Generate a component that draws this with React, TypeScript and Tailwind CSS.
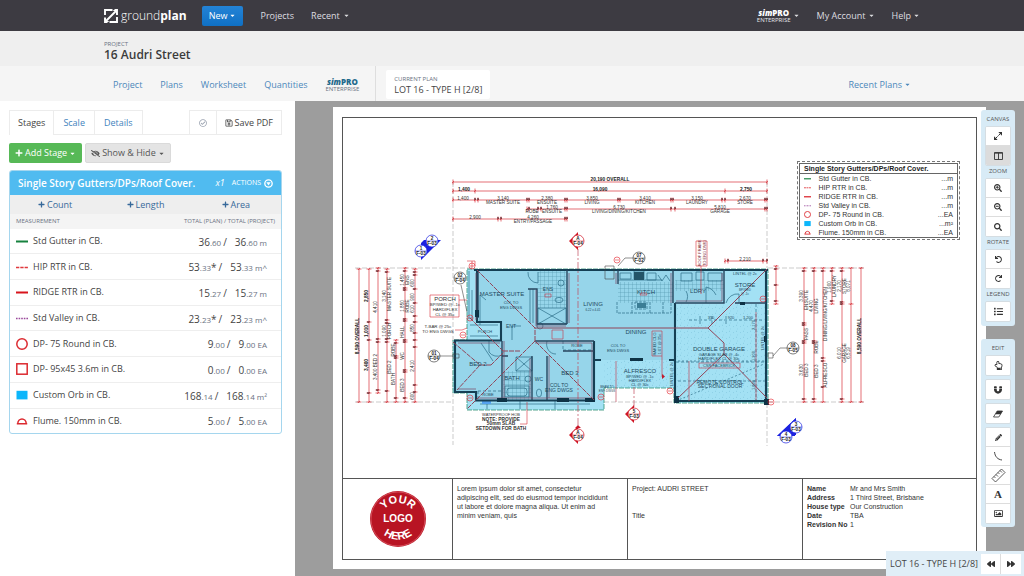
import type { ReactNode } from "react";
import {
  FaBackward,
  FaCaretDown,
  FaEyeSlash,
  FaForward,
  FaList,
  FaMagnet,
  FaPencilAlt,
  FaPlus,
  FaRedo,
  FaRegCheckCircle,
  FaRegHandPointUp,
  FaRegImage,
  FaRegSave,
  FaSearch,
  FaSearchMinus,
  FaSearchPlus,
  FaUndo,
} from "react-icons/fa";

type Symbol = "green" | "redDash" | "red" | "purpleDash" | "circle" | "square" | "fill" | "flume";

const measurements: { symbol: Symbol; name: string; whole: string; frac: string; mark?: string; unit: string }[] = [
  { symbol: "green", name: "Std Gutter in CB.", whole: "36", frac: ".60", unit: "m" },
  { symbol: "redDash", name: "HIP RTR in CB.", whole: "53", frac: ".33", mark: "*", unit: "m^" },
  { symbol: "red", name: "RIDGE RTR in CB.", whole: "15", frac: ".27", unit: "m" },
  { symbol: "purpleDash", name: "Std Valley in CB.", whole: "23", frac: ".23", mark: "*", unit: "m^" },
  { symbol: "circle", name: "DP- 75 Round in CB.", whole: "9", frac: ".00", unit: "EA" },
  { symbol: "square", name: "DP- 95x45 3.6m in CB.", whole: "0", frac: ".00", unit: "EA" },
  { symbol: "fill", name: "Custom Orb in CB.", whole: "168", frac: ".14", unit: "m²" },
  { symbol: "flume", name: "Flume. 150mm in CB.", whole: "5", frac: ".00", unit: "EA" },
];

const legend: { symbol: Symbol; name: string; unit: string }[] = [
  { symbol: "green", name: "Std Gutter in CB.", unit: "...m" },
  { symbol: "redDash", name: "HIP RTR in CB.", unit: "...m" },
  { symbol: "red", name: "RIDGE RTR in CB.", unit: "...m" },
  { symbol: "purpleDash", name: "Std Valley in CB.", unit: "...m" },
  { symbol: "circle", name: "DP- 75 Round in CB.", unit: "...EA" },
  { symbol: "fill", name: "Custom Orb in CB.", unit: "...m²" },
  { symbol: "flume", name: "Flume. 150mm in CB.", unit: "...EA" },
];

const details = [
  ["Name", "Mr and Mrs Smith"],
  ["Address", "1 Third Street, Brisbane"],
  ["House type", "Our Construction"],
  ["Date", "TBA"],
  ["Revision No", "1"],
];

function SymbolIcon({ symbol, className }: { symbol: Symbol; className: string }) {
  return (
    <svg aria-hidden className={className} viewBox="0 0 12 12" fill="none" strokeWidth={1.5}>
      {symbol === "green" && <path d="M0 6.500h12" stroke="#17823f" strokeWidth={2} />}
      {symbol === "redDash" && <path d="M0 6.500h12" stroke="#e0383d" strokeDasharray="3.3 1" />}
      {symbol === "red" && <path d="M0 6.500h12" stroke="#d8141c" strokeWidth={2} />}
      {symbol === "purpleDash" && <path d="M0 6.500h12" stroke="#9a4a9c" strokeDasharray="1.6 1" />}
      {symbol === "circle" && <circle cx={6} cy={6} r={5.2} stroke="#dc2a30" />}
      {symbol === "square" && <rect x={0.8} y={0.8} width={10.4} height={10.4} stroke="#dc2a30" />}
      {symbol === "fill" && <rect x={0.5} y={1.8} width={11} height={8.6} fill="#0cb6fb" />}
      {symbol === "flume" && <path d="M.8 8.800h10.400M1.800 8.600a4.200 4.600 0 0 1 8.400 0" stroke="#dc2a30" />}
    </svg>
  );
}

function SimPro({ tone }: { tone: "light" | "blue" }) {
  return (
    <span className="flex flex-col items-center">
      <span className={tone === "light" ? "text-[8px] font-extrabold leading-[8px] text-white" : "text-[8px] font-extrabold leading-[8px] text-[#1f6a8c]"}>
        <i>sim</i>PRO
      </span>
      <span className={tone === "light" ? "text-[6px] leading-[6px] text-gray-200" : "text-[6px] leading-[6px] text-gray-500"}>
        ENTERPRISE
      </span>
    </span>
  );
}

function TopBar() {
  return (
    <header className="bg-[#3d3b42] text-[#dddde0]">
      <div className="mx-auto flex h-[31px] max-w-[816px] items-center text-[9px]">
        <a href="#" className="flex items-center gap-[3px] text-white">
          <svg aria-hidden className="h-[14px] w-[14px]" viewBox="0 0 14 14" fill="none" stroke="currentColor" strokeWidth={1.9}>
            <path d="M1 6V1h7.500M13 8V13H5.500M10.500 1H13v5M1 8.500V13h2.500M3 11L11 3" />
            <path d="M1 8.800V13h4.200zM13 5.200V1H8.800z" fill="currentColor" stroke="none" />
          </svg>
          <span className="text-[12px] leading-4">
            <span className="font-light">ground</span>
            <span className="font-bold">plan</span>
          </span>
        </a>
        <button className="ml-[15px] flex h-5 items-center gap-[2px] rounded-[2px] bg-linear-to-b from-[#2383d6] to-[#0f70c4] px-[7px] text-white">
          New <FaCaretDown className="h-[7px] w-[7px]" />
        </button>
        <nav className="ml-[17px] flex items-center gap-[17px]">
          <a href="#">Projects</a>
          <a href="#" className="flex items-center gap-[3px]">
            Recent <FaCaretDown className="h-[7px] w-[7px]" />
          </a>
        </nav>
        <div className="ml-auto flex items-center gap-[17px]">
          <a href="#" className="flex items-center gap-[2px]">
            <SimPro tone="light" /> <FaCaretDown className="h-[7px] w-[7px]" />
          </a>
          <a href="#" className="flex items-center gap-[2px]">
            My Account <FaCaretDown className="h-[7px] w-[7px]" />
          </a>
          <a href="#" className="flex items-center gap-[2px]">
            Help <FaCaretDown className="h-[7px] w-[7px]" />
          </a>
        </div>
      </div>
    </header>
  );
}

function ProjectBar() {
  return (
    <div className="bg-[#efefef]">
      <div className="mx-auto h-[35px] max-w-[816px] pt-[10px]">
        <p className="text-[6px] leading-[7px] text-gray-500">PROJECT</p>
        <h1 className="text-[12px] font-semibold leading-[14px] text-[#3c3c3c]">16 Audri Street</h1>
      </div>
    </div>
  );
}

function SubNav() {
  return (
    <div className="bg-[#f5f5f5]">
      <div className="mx-auto flex h-[35px] max-w-[816px] items-stretch text-[9px] text-[#4c88bb]">
        <nav className="flex items-center gap-[18px] border-r border-[#dedede] pl-[9px] pr-[16px] pt-[2px]">
          <a href="#">Project</a>
          <a href="#">Plans</a>
          <a href="#">Worksheet</a>
          <a href="#">Quantities</a>
          <a href="#">
            <SimPro tone="blue" />
          </a>
        </nav>
        <div className="mb-[2px] ml-[10px] mt-[4px] flex flex-col justify-center rounded-[2px] bg-white px-[8px] pt-[2px]">
          <span className="text-[6px] leading-[9px] text-gray-500">CURRENT PLAN</span>
          <span className="text-[9px] leading-[12px] text-[#444]">LOT 16 - TYPE H [2/8]</span>
        </div>
        <a href="#" className="ml-auto mr-[9px] flex items-center gap-[2px] pt-[2px]">
          Recent Plans <FaCaretDown className="h-[7px] w-[7px]" />
        </a>
      </div>
    </div>
  );
}

function StagesPanel() {
  return (
    <aside className="w-[295px] shrink-0 bg-white px-[9px] pt-[9px] text-[#444]">
      <div className="mr-[4px] flex h-[25px] border-b border-[#ececec] text-[9px]">
        <button className="-mb-px border border-b-0 border-[#ececec] bg-white px-[8px]">Stages</button>
        <button className="border-r border-t border-[#ececec] px-[9px] text-[#3f83bd]">Scale</button>
        <button className="border-r border-t border-[#ececec] px-[9px] text-[#3f83bd]">Details</button>
        <button aria-label="Status" className="ml-auto border-l border-t border-[#ececec] px-[9px] text-gray-400">
          <FaRegCheckCircle className="h-[8px] w-[8px]" />
        </button>
        <button className="flex items-center gap-[2px] border-x border-t border-[#ececec] px-[8px]">
          <FaRegSave className="h-[8px] w-[8px]" /> Save PDF
        </button>
      </div>

      <div className="mt-[8px] flex gap-[3px] text-[9px]">
        <button className="flex h-[20px] items-center gap-[2px] rounded-[2px] bg-[#57b957] px-[6px] text-white">
          <FaPlus className="h-[8px] w-[8px]" /> Add Stage <FaCaretDown className="h-[7px] w-[7px]" />
        </button>
        <button className="flex h-[20px] items-center gap-[2px] rounded-[2px] border border-[#dadada] bg-[#e4e4e4] px-[5px] text-[#555]">
          <FaEyeSlash className="h-[9px] w-[9px]" /> Show &amp; Hide <FaCaretDown className="h-[7px] w-[7px]" />
        </button>
      </div>

      <section className="mr-[4px] mt-[7px] overflow-hidden rounded-[3px] border border-[#a5d6ee]">
        <div className="flex h-[24px] items-center bg-[#50bbf0] px-[8px] text-white">
          <h2 className="text-[10px] font-semibold">Single Story Gutters/DPs/Roof Cover.</h2>
          <span className="ml-auto text-[9px] italic">x1</span>
          <button className="ml-[7px] flex items-center gap-[3px] text-[7px]">
            ACTIONS
            <svg aria-hidden className="h-[9px] w-[9px]" viewBox="0 0 10 10">
              <circle cx={5} cy={5} r={4.1} fill="none" stroke="currentColor" strokeWidth={1.5} />
              <path d="M2.600 3.600h4.800L5 7.200z" fill="currentColor" />
            </svg>
          </button>
        </div>
        <div className="grid h-[19px] grid-cols-3 bg-[#eeeeee] text-[9px] text-[#37699a]">
          {["Count", "Length", "Area"].map((label) => (
            <button key={label} className="flex items-center justify-center gap-[2px]">
              <FaPlus className="h-[7px] w-[7px]" /> {label}
            </button>
          ))}
        </div>
        <table className="h-[219px] w-full">
          <thead>
            <tr className="h-[15px] bg-[#f4f4f4] text-[6px] leading-[15px] text-gray-500">
              <th className="pl-[6px] text-left font-normal">MEASUREMENT</th>
              <th className="pr-[6px] text-right font-normal">TOTAL (PLAN) / TOTAL (PROJECT)</th>
            </tr>
          </thead>
          <tbody>
            {measurements.map((m) => (
              <tr key={m.name} className="border-b border-[#eeeeee] last:border-b-0">
                <td className="pl-[6px] text-[9px] leading-3">
                  <span className="flex items-center gap-[5px]">
                    <SymbolIcon symbol={m.symbol} className="h-[12px] w-[12px]" /> {m.name}
                  </span>
                </td>
                <td className="whitespace-nowrap pr-[14px] pt-[2px] text-right text-[10px] leading-3">
                  {m.whole}
                  <span className="text-[8px] text-gray-500">{m.frac}</span>
                  {m.mark}
                  <span className="ml-[2px] mr-[8px]">/</span>
                  {m.whole}
                  <span className="text-[8px] text-gray-500">
                    {m.frac} {m.unit}
                  </span>
                </td>
              </tr>
            ))}
          </tbody>
        </table>
      </section>
    </aside>
  );
}

/* ── Plan drawing ── */

type Label = [number, number, string];

// Horizontal dimension runs: y, then tick positions
const rows: [number, number[]][] = [
  [182, [453, 767]],
  [191, [453, 475, 725, 767]],
  [200, [453, 475, 478, 527, 529, 565, 567, 618, 620, 671, 673, 722, 725, 765, 767]],
  [209, [527, 529, 538, 541, 565, 567, 671, 675, 765, 767]],
  [219, [453, 498, 501, 565, 567]],
  [261, [725, 728, 763, 767]],
];

// Vertical dimension runs: x, then tick positions
const columns: [number, number[]][] = [
  [359, [269, 402]],
  [369, [269, 322, 340, 393, 402]],
  [378, [268, 271, 339, 342, 390, 393]],
  [387, [269, 272, 320, 323, 339, 342, 391, 402]],
  [396, [340, 343, 356, 358, 398, 402]],
  [405, [268, 271, 288, 290, 319, 321, 340, 342, 370, 372, 398, 402]],
  [415, [269, 272, 275, 289, 303, 316, 322, 333, 340, 347, 385, 392, 402]],
  [776, [266, 269, 285, 301, 304]],
  [804, [268, 271, 323, 325, 341, 343, 399, 402]],
  [814, [268, 271, 341, 343, 399, 402]],
  [823, [268, 271, 358, 361, 387, 402]],
  [832, [268, 271, 301, 304]],
  [842, [268, 271, 302, 304, 399, 402]],
  [851, [268, 304, 402]],
  [861, [268, 402]],
];

const rowLabels: Label[] = [
  [463, 200, "1,400"], [475, 219, "2,900"], [503, 200, "3,140"], [503, 204, "MASTER SUITE"], [547, 200, "2,380"],
  [547, 204, "ENSUITE"], [592, 200, "3,850"], [592, 204, "LIVING"], [645, 200, "3,410"], [645, 204, "KITCHEN"],
  [697, 200, "3,150"], [697, 204, "LAUNDRY"], [745, 200, "2,670"], [745, 204, "STORE"], [532, 213, "ROBE"],
  [552, 209, "1,760"], [552, 213, "ENSUITE"], [619, 209, "6,730"], [619, 213, "LIVING/DINING/KITCHEN"],
  [720, 209, "5,810"], [720, 213, "GARAGE"], [533, 219, "4,260"], [533, 223, "ENTRY/PASSAGE"], [745, 261, "2,210"],
];

const columnLabels: Label[] = [
  [377, 307, "4,410"], [377, 367, "3,400 BED 2"], [386, 296, "3,140"], [391, 294, "MASTER SUITE"], [386, 331, "1,090"],
  [391, 331, "PORCH"], [391, 367, "BED 2"], [395, 350, "ROBE"], [395, 379, "BATH"], [404, 280, "1,450"], [409, 280, "ENS"],
  [404, 306, "1,850"], [409, 306, "ROBE"], [404, 332, "HALL"], [404, 356, "WC"], [404, 385, "BED 3"], [414, 283, "600"],
  [414, 297, "900"], [414, 309, "610"], [414, 328, "850"], [414, 366, "2,410"], [414, 396, "600"],
  [803, 296, "3,390"], [808, 300, "ENSUITE"], [808, 334, "PASS"], [808, 370, "BED 3"], [803, 370, "3,630"],
  [813, 306, "4,470"], [818, 306, "LIVING"], [818, 347, "ROBE"], [818, 371, "BED 3"], [827, 314, "DINING/LIVING/KITCHEN"],
  [827, 375, "ALFRESCO"], [831, 287, "1,900"], [836, 286, "LAUNDRY"], [841, 286, "2,170"], [846, 286, "STORE"],
  [841, 353, "6,010"], [846, 353, "GARAGE"], [850, 286, "8,071"], [850, 353, "6,519"],
];

const roomLabels: [number, number, number, string][] = [
  [502, 296, 6, "MASTER SUITE"], [511, 304, 4, "COL TO"], [511, 309, 4, "ENG DWGS"], [548, 291, 5, "ENS"], [593, 306, 6, "LIVING"],
  [593, 311, 3, "6.22 x 4.41"], [646, 294, 6, "KITCH"], [698, 293, 6, "LDRY"], [745, 287, 6, "STORE"], [745, 275, 4, "LINTEL @ 2c"],
  [745, 291, 3, "BP/WED"], [745, 295, 3, "@ -1c"], [636, 334, 6, "DINING"], [618, 347, 4, "COL TO"], [618, 352, 4, "ENG DWGS"],
  [719, 351, 6, "DOUBLE GARAGE"], [719, 356, 4, "GARAGE SLAB @ -4c"], [719, 360, 4, "HARDIFLEX CL @ 30c"], [719, 367, 4, "CSR FACEBRICK"],
  [720, 384, 5, "REMOTE CONTROL"], [720, 388, 5, "SECTIONAL DOOR"], [640, 373, 6, "ALFRESCO"], [640, 378, 4, "BP/WED @ -1c"],
  [640, 382, 4, "HARDIFLEX"], [640, 386, 4, "CL @ 30c"], [511, 328, 5, "ENT"], [478, 366, 6, "BED 2"], [570, 375, 6, "BED 3"],
  [559, 387, 5, "COL TO"], [559, 392, 5, "ENG DWGS"], [512, 380, 6, "BATH"], [539, 381, 5, "WC"], [577, 347, 4, "ROBE"], [488, 396, 4, "ROBE"],
  [607, 388, 3, "BEAM TO"], [607, 392, 3, "ENG DWGS"], [485, 333, 4, "PORCH"],
];

const gutterPoints = [
  [472, 266], [617, 260], [470, 318], [463, 335], [470, 398], [601, 397], [670, 391], [771, 402], [763, 299],
];

function Marker({ x, y, top, bottom, color, r = 6 }: { x: number; y: number; top: string; bottom: string; color: string; r?: number }) {
  return (
    <g>
      <circle cx={x} cy={y} r={r} fill="#fff" stroke={color} strokeWidth={0.7} />
      <path d={`M${x - r} ${y}h${r * 2}`} stroke={color} strokeWidth={0.5} />
      <g fill="#222" fontWeight={700} fontSize={4.6} textAnchor="middle">
        <text x={x} y={y - 1}>{top}</text>
        <text x={x} y={y + 4}>{bottom}</text>
      </g>
    </g>
  );
}

function PlanDrawing() {
  return (
    <svg className="block w-full font-['Liberation_Sans']" viewBox="343 118 633 360" role="img" aria-label="Floor plan">
      <defs>
        <pattern id="tiles" width={4} height={4} patternUnits="userSpaceOnUse">
          <path d="M0 0h4M0 0v4" stroke="#4c8ea8" strokeWidth={0.6} />
        </pattern>
        <pattern id="speckle" width={7} height={6} patternUnits="userSpaceOnUse">
          <path d="M1 1l1 .6M5 3l.8-.7M2 5h.6" stroke="#6db6d0" strokeWidth={0.5} />
        </pattern>
      </defs>

      {/* Setout lines */}
      <path
        d="M453 182V445M767 182V268M767 403V446M355 268H475M355 402H453M768 268H865M604 402H676M768 402H865"
        fill="none" stroke="#aaa" strokeWidth={0.6} strokeDasharray="5 2"
      />

      {/* Dimension runs */}
      <g stroke="#d9303a" strokeWidth={0.7}>
        {rows.map(([y, ticks]) => (
          <g key={y}>
            <path d={`M${ticks[0]} ${y}H${ticks[ticks.length - 1]}`} />
            {ticks.map((x) => (
              <path key={x} d={`M${x} ${y - 2.5}v5M${x - 1} ${y + 1}l2-2`} />
            ))}
          </g>
        ))}
        {columns.map(([x, ticks]) => (
          <g key={x}>
            <path d={`M${x} ${ticks[0]}V${ticks[ticks.length - 1]}`} />
            {ticks.map((y) => (
              <path key={y} d={`M${x - 2.5} ${y}h5M${x - 1} ${y + 1}l2-2`} />
            ))}
          </g>
        ))}
      </g>
      <g stroke="#532a30" strokeWidth={1.2}>
        {rows.slice(2).map(([y, ticks]) => ticks.slice(1).map((x) => <path key={`${x}-${y}`} d={`M${x} ${y - 2}v2`} />))}
        {columns.slice(1, 13).map(([x, ticks]) => ticks.slice(1, -1).map((y) => <path key={`${x}-${y}`} d={`M${x - 2} ${y}h2.500`} />))}
      </g>
      <g fill="#333" fontSize={4.6} textAnchor="middle">
        {rowLabels.map(([x, y, text]) => (
          <text key={`${x}-${y}`} x={x} y={y}>{text}</text>
        ))}
        {columnLabels.map(([x, y, text]) => (
          <text key={`${x}-${y}`} transform={`translate(${x} ${y}) rotate(-90)`}>{text}</text>
        ))}
      </g>
      <g fill="#222" fontWeight={700} fontSize={4.8} textAnchor="middle">
        <text x={610} y={181}>20,190 OVERALL</text>
        <text x={464} y={191}>1,400</text>
        <text x={600} y={191}>16,090</text>
        <text x={746} y={191}>2,750</text>
        <text transform="translate(359 336) rotate(-90)">8,590 OVERALL</text>
        <text transform="translate(861 336) rotate(-90)">8,590 OVERALL</text>
        <text transform="translate(368 296) rotate(-90)">2,850</text>
        <text transform="translate(368 331) rotate(-90)">1,010</text>
        <text transform="translate(368 365) rotate(-90)">3,400</text>
      </g>

      {/* Roof area */}
      <path
        d="M467 269H768V403H674V388H604V410H467V393H453V340H467Z"
        fill="#a3e1f4" stroke="#2f8f74" strokeWidth={0.8} strokeDasharray="5 1"
      />
      <path
        d="M477 270H725V303H675V360H594V400H476V392H455V341H501V322H477Z"
        fill="#96d5ea"
      />
      <path d="M604 360H674V388H604ZM676 304H766V401H676Z" fill="url(#speckle)" />
      <path d="M538 271H566V308H538ZM618 282H673V303H618ZM675 280H724V291H675ZM503 371H531V400H503Z" fill="url(#tiles)" />

      {/* Fixtures */}
      <g fill="none" stroke="#2b6d86" strokeWidth={0.7}>
        <path d="M530 289v34M533 289v34M538 308h28v16h-28zM538 308l28 16M566 308l-28 16" />
        <path d="M618 280h44M634 271h10v8h-10zM636 273h6M636 276h6M620 273h11v6h-11zM647 273h9v7h-9zM658 275l4 6 4-6 4 6" />
        <path d="M617 302v11h54v-11M635 302h12v7h-12zM650 302v11M663 302v11M632 302v11" strokeDasharray="3 1" />
        <path d="M681 273h11v8h-11zM696 272h8v8h-8zM708 273h14v8h-14zM686 302a11 11 0 0 0 0-11M706 303v-16a14 16 0 0 1 10 8" />
        <path d="M726 303a12 13 0 0 1 13-9v9M489 352a10 10 0 0 0 13 3M489 341v11M547 341a9 10 0 0 0 9 13M512 340v-14h9" />
        <path d="M505 386h24v11h-24z" />
        <rect x={507} y={388} width={20} height={8} rx={3} />
        <path d="M516 357h16v14h-16zM516 357l16 14M532 357l-16 14M528 272a10 10 0 0 0 10 11v-11" />
        <circle cx={561} cy={283} r={3} />
        <circle cx={528} cy={379} r={3} />
        <circle cx={540} cy={326} r={3} />
        <ellipse cx={559} cy={300} rx={4} ry={2.6} />
        <ellipse cx={539} cy={393} rx={2.6} ry={4} />
        <path d="M563 350h31M563 341v9M478 391h24M478 391v9M678 381h88M676 362h90M756 304v96M689 320h74M700 316v8M712 316v8M726 316v8" strokeDasharray="3 2" />
        <path d="M678 361h86M676 401L764 364" strokeDasharray="2 2" />
        <path d="M469 271v48M472 290v30M480 404h110M487 401v8M520 401v8M555 401v8M470 325h28M470 336h28M481 343l12 18M486 300l-6-5v30" />
      </g>
      <path d="M634 272h10v8h-10z" fill="#235468" />
      <path d="M637 303h9v5h-9z" fill="#3b7d95" />
      <path d="M482 401h9v3h-9z" fill="#54a2ee" />
      <path d="M675 366v22" stroke="#5b83ea" strokeWidth={2} />

      {/* Walls */}
      <g fill="none" stroke="#153f54" strokeWidth={2.1} strokeLinejoin="miter">
        <path d="M474 270H768M477 270V322H501V340.500H455V392H476V400.500H594" />
        <path d="M766 269V404M675 303V402M675 401H768" />
        <path d="M594 341V401M594 360H601M630 360H643M669 360H676" />
      </g>
      <g fill="none" stroke="#28465f" strokeWidth={1.4}>
        <path d="M567 270V324M567 324H537V289H528M618 270V284M673 270V303M675 303H724V270M735 303H766" />
        <path d="M535 341H594M547 356V400M532 356V400M502 341V400M502 356H508M478 272v46M563 351H594" />
      </g>
      <g fill="none" stroke="#7c4561" strokeWidth={0.7}>
        <path d="M569 273V323M476 273V320M566 326H536V290M616 273V284M671 273V303M722 273V301H676" />
        <path d="M535 343H592V398M549 356V398M530 358V398M504 341V398M478 398H592M458 343H500M458 389H476" />
      </g>
      <path
        d="M674 396h5v7h-5zM764 399h5v6h-5zM475 310h4v7h-4zM630 358h13v3h-13zM497 398h10v4h-10zM557 398h12v4h-12zM585 398h10v4h-10zM740 302h5v3h-5zM764 336h3v6h-3z"
        fill="#0e3346"
      />

      {/* Hips, ridges and valleys */}
      <g fill="none" stroke="#914458" strokeWidth={1}>
        <path d="M535 328H708M708 328L767 269M708 328L724 343V354L767 398M724 354L678 398" />
        <path d="M477 270L535 328V341L594 400M535 341L467 409M480 365H491M503 351H520M453 342L480 365L457 390M470 318L503 351M491 365L504 352" strokeDasharray="5 1" />
      </g>

      {/* Room names */}
      <g fill="#1e4a5e" textAnchor="middle">
        {roomLabels.map(([x, y, size, text]) => (
          <text key={`${x}-${y}`} x={x} y={y} fontSize={size}>{text}</text>
        ))}
        <g fontSize={4}>
          <text transform="translate(656 344) rotate(-90)">RAKED CLG</text>
          <text transform="translate(661 344) rotate(-90)">1:07 @ 35c</text>
          <text transform="translate(755 325) rotate(-90)">2,170</text>
          <text transform="translate(755 356) rotate(-90)">1,200</text>
          <text transform="translate(755 385) rotate(-90)">1,800</text>
          <text transform="translate(764 338) rotate(-90)">LINTEL @ 2c</text>
          <text transform="translate(673 374) rotate(-90)">LINTEL @ 2c</text>
          <text x={711} y={319}>350</text>
          <text x={731} y={319}>920</text>
          <text x={748} y={319}>1,200</text>
        </g>
      </g>
      <g fill="none" stroke="#c04a5c" strokeWidth={0.7}>
        <path d="M652 331h10v25h-10zM662 356v21M699 363h41v5h-41zM640 295h7l-1-2h-5zM545 294h6v3h-6zM552 330h11v9h-11zM616 361v41M689 361v40M756 312v88" />
        <path d="M578 249V430M634 387V408" strokeDasharray="7 2 2 2" />
      </g>
      <path d="M662 374l3 2.500-3 2.500zM578 425l3 3h-6z" fill="#c2182b" />

      {/* Notes outside the walls */}
      <g fill="none" stroke="#d9303a" strokeWidth={0.6}>
        <path d="M430 295h29v22h-29zM459 300h8M455 330h7l5-2M527 402v22h-7M696 241h11v25h-11zM701 266v28M467 261h8v5M472 261v8" />
        {gutterPoints.map(([x, y]) => (
          <g key={`${x}-${y}`}>
            <circle cx={x} cy={y} r={3} stroke="#e5202a" />
            <path d={`M${x - 2} ${y}h4`} />
          </g>
        ))}
      </g>
      <g fill="#333" fontSize={4.4} textAnchor="middle">
        <text x={445} y={301} fontSize={6}>PORCH</text>
        <text x={445} y={306}>BP/WED @ -1c</text>
        <text x={445} y={311}>HARDIFLEX</text>
        <text x={445} y={316}>CL @ 35c</text>
        <text x={438} y={328}>T-BAR @ 25c</text>
        <text x={438} y={333}>TO ENG DWGS</text>
        <text x={501} y={416} fontSize={4}>WATERPROOF HOB</text>
        <g fontWeight={700} fontSize={4.8}>
          <text x={501} y={421}>NOTE: PROVIDE</text>
          <text x={501} y={425}>50mm SLAB</text>
          <text x={501} y={430}>SETDOWN FOR BATH</text>
        </g>
        <g fontSize={4} fill="#803038">
          <text transform="translate(701 253) rotate(-90)">ROOF FRAME</text>
          <text transform="translate(706 253) rotate(-90)">TO ENG DWG</text>
        </g>
      </g>

      {/* Section and elevation markers */}
      <path
        d="M461 285l6 27M440 356h13M453 354h6v4h-6zM633 258h-8l-7 8M787 348h-7l-7 8M768 353h5v5h-5zM605 266h9v13h-9z"
        fill="none" stroke="#444" strokeWidth={0.6}
      />
      <Marker x={460} y={278} top="02" bottom="F-04" color="#444" />
      <Marker x={639} y={258} top="07" bottom="F-02" color="#444" />
      <Marker x={434} y={356} top="01" bottom="F-04" color="#444" />
      <Marker x={793} y={348} top="08" bottom="F-05" color="#444" />
      <path d="M569 241l9-9v18zM569 435l9-9v18zM625 414l9-9v18z" fill="#d01625" />
      <Marker x={578} y={241} top="A" bottom="F-04" color="#d01625" />
      <Marker x={578} y={435} top="A" bottom="F-04" color="#d01625" />
      <Marker x={634} y={414} top="5" bottom="F-03" color="#d01625" />
      <path d="M421 260l20-20h-17l-3 3zM777 436l19-18v17z" fill="#1c22e0" />
      <path d="M777 436h18l1-18z" fill="#1c22e0" />
      <Marker x={432} y={241} top="2" bottom="F-03" color="#1c22e0" />
      <Marker x={421} y={251} top="1" bottom="F-03" color="#1c22e0" />
      <Marker x={796} y={427} top="3" bottom="F-03" color="#1c22e0" />
      <Marker x={786} y={437} top="4" bottom="F-03" color="#1c22e0" />
    </svg>
  );
}

function PlanLegend() {
  return (
    <div className="absolute right-[16px] top-[43px] w-[163px] border border-dashed border-[#777] p-px">
      <table className="w-full border border-[#666] text-[7px] leading-[9px] text-[#333]">
        <thead>
          <tr className="border-b border-[#666]">
            <th colSpan={3} className="pl-[4px] text-left font-bold text-[#222]">
              Single Story Gutters/DPs/Roof Cover.
            </th>
          </tr>
        </thead>
        <tbody>
          {legend.map((item) => (
            <tr key={item.name}>
              <td className="w-[19px] pl-[4px]">
                <SymbolIcon symbol={item.symbol} className="h-[7px] w-[7px]" />
              </td>
              <td>{item.name}</td>
              <td className="pr-[4px] text-right">{item.unit}</td>
            </tr>
          ))}
        </tbody>
      </table>
    </div>
  );
}

function TitleBlock() {
  return (
    <div className="grid grid-cols-[110fr_175fr_175fr_173fr] divide-x divide-[#555] border-t border-[#555] text-[7px] leading-[9px] text-[#333]">
      <div className="flex h-[80px] items-center justify-center">
        <svg className="h-[58px] w-[58px]" viewBox="0 0 58 58" role="img" aria-label="Your logo here">
          <defs>
            <path id="arcTop" d="M12 25a18 18 0 0 1 34 0" />
            <path id="arcBottom" d="M8 36a23 23 0 0 0 42 0" />
          </defs>
          <circle cx={29} cy={29} r={28} fill="#b81423" />
          <circle cx={29} cy={29} r={27} fill="none" stroke="#e7707b" strokeWidth={0.6} />
          <g fill="#fff" fontSize={11} fontWeight={700} textAnchor="middle" fontFamily="Liberation Sans, sans-serif">
            <text>
              <textPath href="#arcTop" startOffset="50%">YOUR</textPath>
            </text>
            <text x={29} y={32} fontSize={10}>LOGO</text>
            <text>
              <textPath href="#arcBottom" startOffset="50%">HERE</textPath>
            </text>
          </g>
        </svg>
      </div>
      <p className="whitespace-nowrap px-[4px] pt-[5px]">
        Lorem ipsum dolor sit amet, consectetur
        <br />
        adipiscing elit, sed do eiusmod tempor incididunt
        <br />
        ut labore et dolore magna aliqua. Ut enim ad
        <br />
        minim veniam, quis
      </p>
      <div className="px-[4px] pt-[5px]">
        <p>Project: AUDRI STREET</p>
        <p className="mt-[18px]">Title</p>
      </div>
      <dl className="grid grid-cols-[43px_1fr] content-start px-[4px] pt-[5px]">
        {details.map(([term, value]) => (
          <div key={term} className="contents">
            <dt className="whitespace-nowrap font-bold">{term}</dt>
            <dd>{value}</dd>
          </div>
        ))}
      </dl>
    </div>
  );
}

function ToolGroup({ label, children }: { label?: string; children: ReactNode }) {
  return (
    <div>
      {label && <p className="h-[11px] text-center text-[6px] leading-[9px] text-[#555]">{label}</p>}
      <div className="divide-y divide-[#dddddd] overflow-hidden rounded-[2px] border border-[#d5dde2] bg-white">{children}</div>
    </div>
  );
}

function Tool({ label, active, children }: { label: string; active?: boolean; children: ReactNode }) {
  return (
    <button
      aria-label={label}
      className={
        active
          ? "flex h-[19px] w-full items-center justify-center bg-[#dcdcdc] text-[#333]"
          : "flex h-[19px] w-full items-center justify-center bg-white text-[#333]"
      }
    >
      {children}
    </button>
  );
}

function Toolbars() {
  return (
    <div className="absolute right-[9px] top-[9px] flex w-[34px] flex-col gap-[13px]">
      <div className="flex flex-col gap-px rounded-[3px] bg-[#d8ebf6] px-[4px] pb-[4px] pt-[5px]">
        <ToolGroup label="CANVAS">
          <Tool label="Fit canvas">
            <svg aria-hidden className="h-[8px] w-[8px]" viewBox="0 0 8 8" fill="currentColor">
              <path d="M4.300 0H8v3.700zM0 4.300V8h3.700z" />
              <path d="M1.500 6.500l5-5" stroke="currentColor" strokeWidth={1} strokeDasharray="3 1" />
            </svg>
          </Tool>
          <Tool label="Split view" active>
            <svg aria-hidden className="h-[8px] w-[9px]" viewBox="0 0 9 8" fill="none" stroke="currentColor" strokeWidth={0.9}>
              <path d="M.5.5h8v7h-8zM.5 1.200h8M4.500 1v6.500" />
            </svg>
          </Tool>
        </ToolGroup>
        <ToolGroup label="ZOOM">
          <Tool label="Zoom in"><FaSearchPlus className="h-[8px] w-[8px]" /></Tool>
          <Tool label="Zoom out"><FaSearchMinus className="h-[8px] w-[8px]" /></Tool>
          <Tool label="Zoom to area"><FaSearch className="h-[8px] w-[8px]" /></Tool>
        </ToolGroup>
        <ToolGroup label="ROTATE">
          <Tool label="Rotate left"><FaUndo className="h-[7px] w-[7px]" /></Tool>
          <Tool label="Rotate right"><FaRedo className="h-[7px] w-[7px]" /></Tool>
        </ToolGroup>
        <ToolGroup label="LEGEND">
          <Tool label="Legend"><FaList className="h-[9px] w-[9px]" /></Tool>
        </ToolGroup>
      </div>

      <div className="flex flex-col gap-[3px] rounded-[3px] bg-[#d8ebf6] px-[4px] pb-[3px] pt-[5px]">
        <ToolGroup label="EDIT">
          <Tool label="Select"><FaRegHandPointUp className="h-[9px] w-[9px]" /></Tool>
        </ToolGroup>
        <ToolGroup>
          <Tool label="Snap"><FaMagnet className="h-[8px] w-[8px]" /></Tool>
        </ToolGroup>
        <ToolGroup>
          <Tool label="Erase">
            <svg aria-hidden className="h-[8px] w-[10px]" viewBox="0 0 10 8">
              <path d="M4.200 1h5.300L5.800 7H.5z" fill="none" stroke="currentColor" strokeWidth={0.8} strokeLinejoin="round" />
              <path d="M4.200 1h5.300L7.600 4.200H2.300z" fill="currentColor" />
            </svg>
          </Tool>
        </ToolGroup>
        <ToolGroup>
          <Tool label="Draw"><FaPencilAlt className="h-[7px] w-[7px]" /></Tool>
          <Tool label="Arc">
            <svg aria-hidden className="h-[10px] w-[10px]" viewBox="0 0 10 10" fill="none" stroke="currentColor" strokeWidth={0.9}>
              <path d="M1.500 1C2 5.500 4.500 8.500 9 9" />
            </svg>
          </Tool>
          <Tool label="Ruler">
            <svg aria-hidden className="h-[15px] w-[15px]" viewBox="0 0 15 15" fill="none" stroke="currentColor" strokeWidth={0.8}>
              <path d="M1 10.500L10.500 1 14 4.500 4.500 14zM3 8.500l1.400 1.400M5 6.500l2 2M7 4.500l1.400 1.400M9 2.500l2 2" />
            </svg>
          </Tool>
          <Tool label="Text"><span className="font-['Liberation_Serif'] text-[11px] font-bold">A</span></Tool>
          <Tool label="Image"><FaRegImage className="h-[9px] w-[9px]" /></Tool>
        </ToolGroup>
      </div>
    </div>
  );
}

function PlanPager() {
  return (
    <div className="absolute bottom-0 right-0 flex h-[25px] items-center bg-[#e0eef7] pl-[4px] pr-[3px] text-[9px] text-[#444]">
      LOT 16 - TYPE H [2/8]
      <div className="ml-[3px] flex divide-x divide-[#dddddd] bg-white text-[#333]">
        <button aria-label="Previous plan" className="flex h-[20px] w-[20px] items-center justify-center">
          <FaBackward className="h-[8px] w-[8px]" />
        </button>
        <button aria-label="Next plan" className="flex h-[20px] w-[20px] items-center justify-center">
          <FaForward className="h-[8px] w-[8px]" />
        </button>
      </div>
    </div>
  );
}

export default function App() {
  return (
    <div className="flex min-h-screen flex-col bg-white font-['Open_Sans',sans-serif]">
      <TopBar />
      <ProjectBar />
      <SubNav />
      <main className="flex flex-1">
        <StagesPanel />
        <div className="relative min-w-0 flex-1 bg-[#9d9d9d] px-[38px] pb-[7px] pt-[6px]">
          <div className="bg-white px-[9px] pb-[9px] pt-[10px] font-['Liberation_Sans',sans-serif]">
            <div className="relative border border-[#555]">
              <PlanDrawing />
              <PlanLegend />
              <TitleBlock />
            </div>
          </div>
          <Toolbars />
          <PlanPager />
        </div>
      </main>
    </div>
  );
}
